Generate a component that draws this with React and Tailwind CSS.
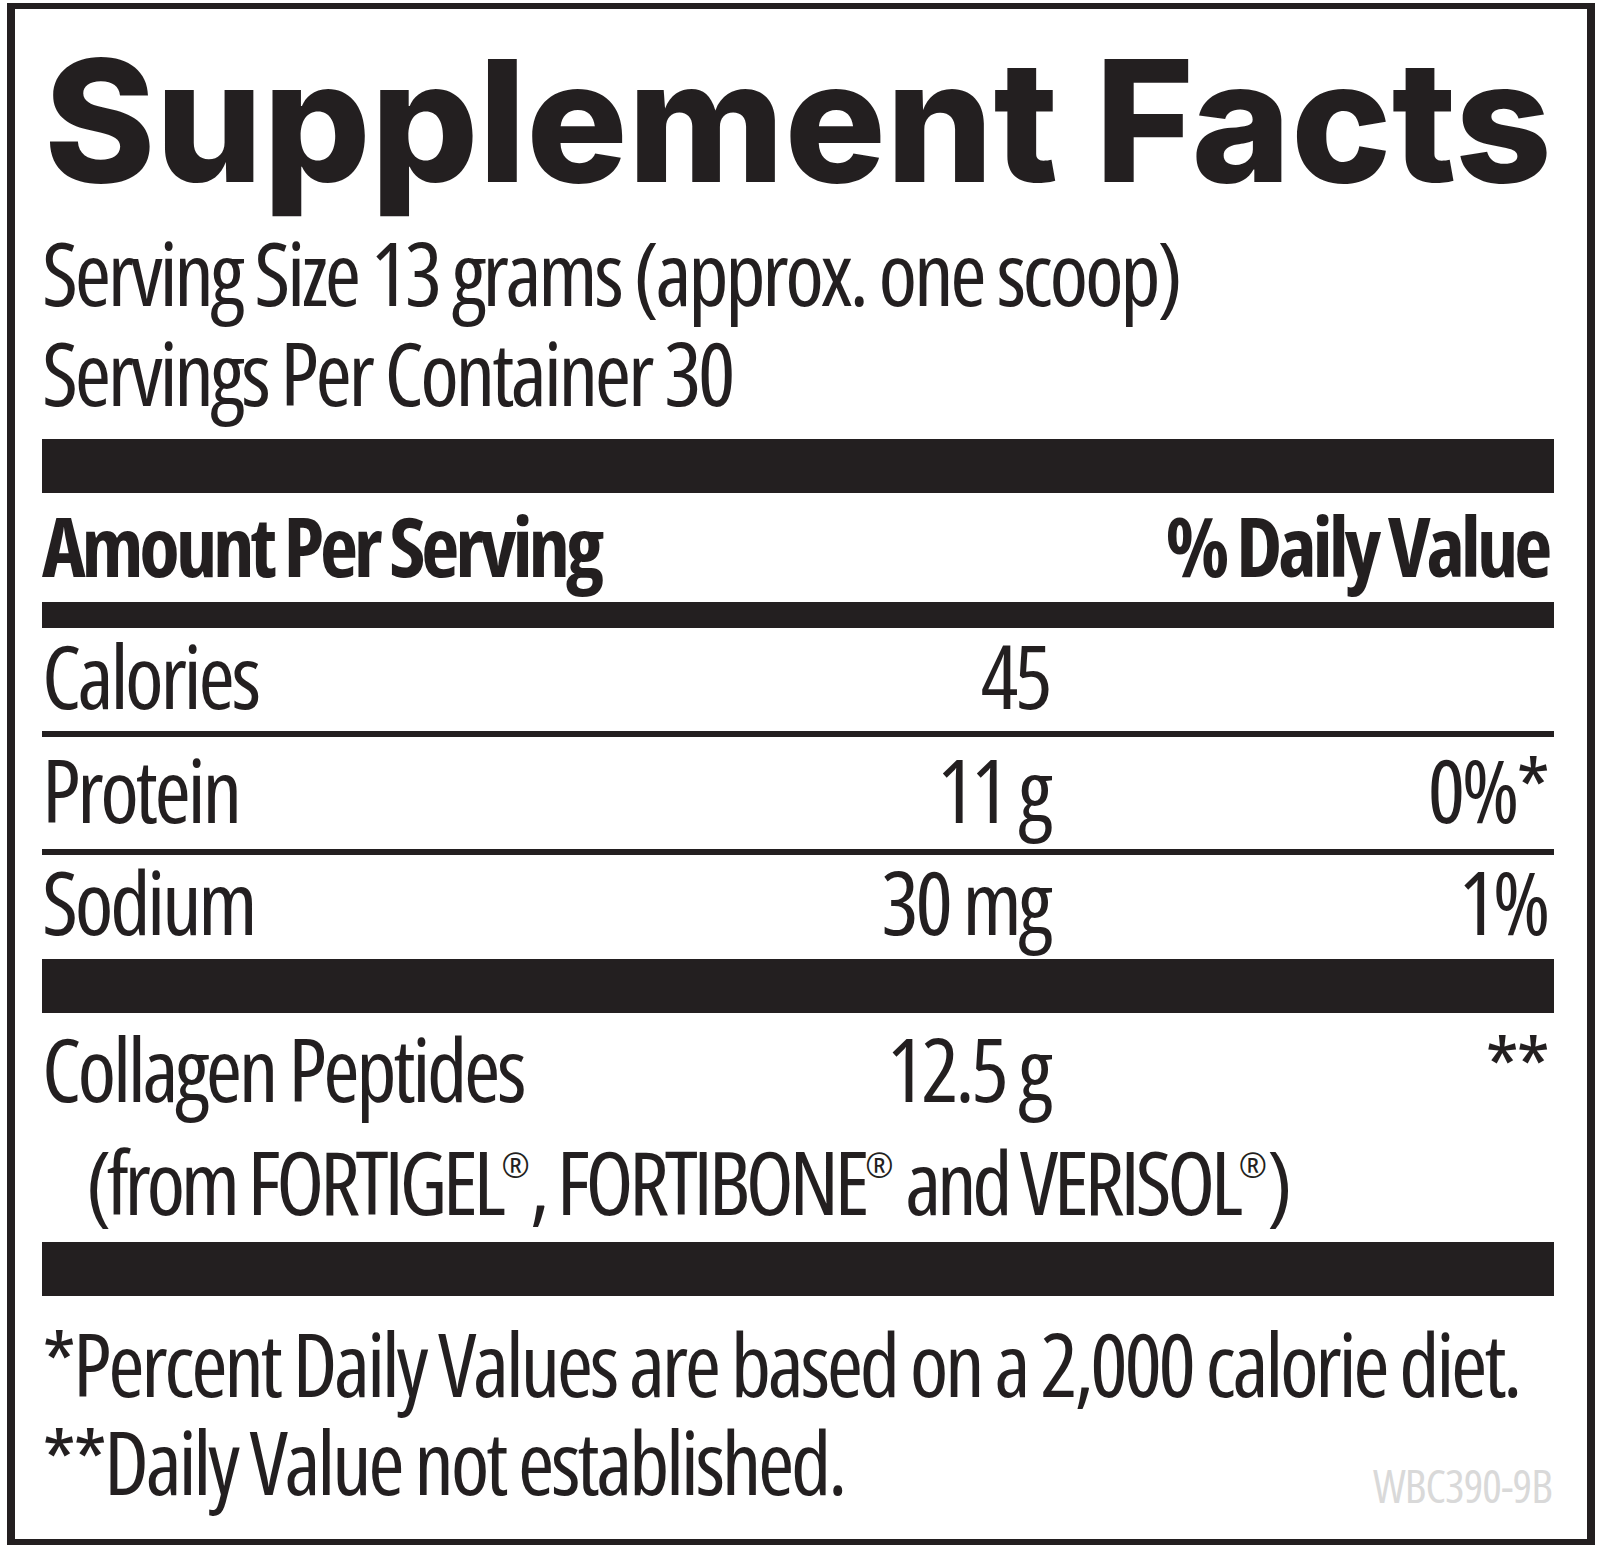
export default function App() {
  const base = "font-['Open_Sans',sans-serif] font-stretch-[75%] whitespace-nowrap";
  const body = `${base} tracking-[-0.038em]`;
  const Reg = () => (
    <span className="text-[34px] align-[37px] leading-none tracking-normal">®</span>
  );
  const cols = "grid grid-cols-[600px_407px_498px]";
  return (
    <div className="w-[1600px] h-[1547px] bg-white pt-[3px] pl-[7px] text-[#231f20]">
      <div className="w-[1588px] h-[1542px] border-x-[8px] border-y-[6px] border-[#231f20] pl-[27px] pr-[33px] flex flex-col">
        {/* Title */}
        <div className="mt-[27px] h-[169px] font-['Inter',sans-serif] font-extrabold text-[169px] leading-none whitespace-nowrap pl-[2px]">
          Supplement Facts
        </div>

        {/* Serving info */}
        <div className={`mt-[17px] text-[88px] leading-[100px] ${body}`}>
          <div>Serving Size 13 grams (approx. one scoop)</div>
          <div>Servings Per Container 30</div>
        </div>

        {/* Bar 1 */}
        <div className="mt-[17px] h-[54px] bg-[#231f20]" />

        {/* Header row */}
        <div className={`h-[109px] pt-[10px] flex justify-between font-bold text-[83px] leading-none pr-[6px] ${base} tracking-[-0.05em]`}>
          <span>Amount Per Serving</span>
          <span>% Daily Value</span>
        </div>

        {/* Bar 2 */}
        <div className="h-[26px] bg-[#231f20]" />

        {/* Calories */}
        <div className={`h-[103px] pt-[3px] ${cols} text-[88px] leading-none ${body}`}>
          <span>Calories</span>
          <span className="text-right">45</span>
          <span className="text-right"></span>
        </div>
        <div className="h-[6px] bg-[#231f20]" />

        {/* Protein */}
        <div className={`h-[112px] pt-[8px] ${cols} text-[88px] leading-none ${body}`}>
          <span>Protein</span>
          <span className="text-right">11 g</span>
          <span className="text-right">0%*</span>
        </div>
        <div className="h-[6px] bg-[#231f20]" />

        {/* Sodium */}
        <div className={`h-[104px] pt-[2px] ${cols} text-[88px] leading-none ${body}`}>
          <span>Sodium</span>
          <span className="text-right">30 mg</span>
          <span className="text-right">1%</span>
        </div>

        {/* Bar 3 */}
        <div className="h-[54px] bg-[#231f20]" />

        {/* Collagen */}
        <div className={`h-[229px] pt-[11px] text-[88px] leading-none ${body}`}>
          <div className={cols}>
            <span>Collagen Peptides</span>
            <span className="text-right">12.5 g</span>
            <span className="text-right">**</span>
          </div>
          <div className="mt-[25px] pl-[44px] tracking-[-0.05em]">
            (from FORTIGEL<Reg />, FORTIBONE<Reg /> and VERISOL<Reg />)
          </div>
        </div>

        {/* Bar 4 */}
        <div className="h-[54px] bg-[#231f20]" />

        {/* Footnotes */}
        <div className={`mt-[23px] text-[88px] leading-none ${body}`}>
          <div>*Percent Daily Values are based on a 2,000 calorie diet.</div>
          <div className="mt-[10px] flex justify-between pr-[2px]">
            <span>**Daily Value not established.</span>
            <span className="self-start mt-[45px] text-[46px] leading-none tracking-[-0.02em] text-[#d9d9d9]">WBC390-9B</span>
          </div>
        </div>
      </div>
    </div>
  );
}
